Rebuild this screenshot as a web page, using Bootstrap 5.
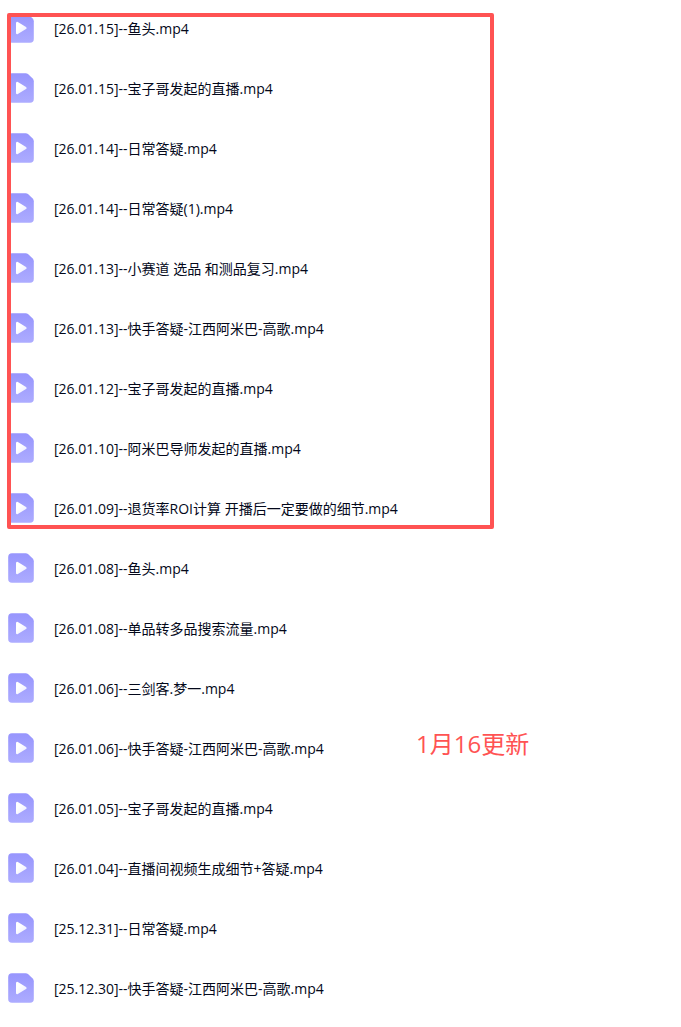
<!DOCTYPE html>
<html lang="zh-CN">
<head>
<meta charset="utf-8">
<meta name="viewport" content="width=device-width, initial-scale=1">
<title>视频列表</title>
<link href="https://cdn.jsdelivr.net/npm/bootstrap@5.3.0/dist/css/bootstrap.min.css" rel="stylesheet">
<style>
  body { font-family: "Open Sans", "Noto Sans CJK SC", sans-serif; font-size: 14px; line-height: 20px; color: #03081a; background: #fff; }
  .file-page { padding: 13px 8px 24px; }
  .file-group { gap: 30px; }
  .file-group-older { margin-top: 30px; }
  .file-item { gap: 20px; height: 30px; }
  .file-icon { width: 26px; height: 30px; }
  .file-name { padding-top: 2px; }
  /* red outline around the newest uploads */
  .new-frame { top: 0; left: -1px; width: 487px; max-width: 100%; bottom: -6px; border: 4px solid #ff5353; border-radius: 2px; pointer-events: none; }
  .update-note { left: 408px; top: -7px; font-size: 24px; line-height: 36px; color: #ff5353; white-space: nowrap; }
</style>
</head>
<body>
<svg width="0" height="0" class="position-absolute" aria-hidden="true">
  <defs>
    <linearGradient id="sheet" x1="0" y1="0" x2="0" y2="1"><stop offset="0" stop-color="#9795fd"/><stop offset="1" stop-color="#adacff"/></linearGradient>
    <linearGradient id="arrow" x1="0" y1="0" x2="1" y2="1"><stop offset=".3" stop-color="#fff"/><stop offset="1" stop-color="#ededff"/></linearGradient>
    <symbol id="video" viewBox="0 0 26 30">
      <path d="M4 .2H17.6Q19 .2 20 1.1L24.7 5.6Q25.8 6.7 25.8 8.2V26Q25.8 29.8 22 29.8H4Q.2 29.8.2 26V4Q.2.2 4 .2Z" fill="url(#sheet)"/>
      <path d="M9.2 10V20L17.4 15Z" fill="url(#arrow)" stroke="url(#arrow)" stroke-width="2.4" stroke-linejoin="round"/>
    </symbol>
  </defs>
</svg>
<main class="file-page container-fluid">
  <div class="position-relative">
    <ul class="file-group list-unstyled d-flex flex-column mb-0">
      <li class="file-item d-flex align-items-center"><svg class="file-icon flex-shrink-0" aria-hidden="true"><use href="#video"/></svg><span class="file-name">[26.01.15]--鱼头.mp4</span></li>
      <li class="file-item d-flex align-items-center"><svg class="file-icon flex-shrink-0" aria-hidden="true"><use href="#video"/></svg><span class="file-name">[26.01.15]--宝子哥发起的直播.mp4</span></li>
      <li class="file-item d-flex align-items-center"><svg class="file-icon flex-shrink-0" aria-hidden="true"><use href="#video"/></svg><span class="file-name">[26.01.14]--日常答疑.mp4</span></li>
      <li class="file-item d-flex align-items-center"><svg class="file-icon flex-shrink-0" aria-hidden="true"><use href="#video"/></svg><span class="file-name">[26.01.14]--日常答疑(1).mp4</span></li>
      <li class="file-item d-flex align-items-center"><svg class="file-icon flex-shrink-0" aria-hidden="true"><use href="#video"/></svg><span class="file-name">[26.01.13]--小赛道 选品 和测品复习.mp4</span></li>
      <li class="file-item d-flex align-items-center"><svg class="file-icon flex-shrink-0" aria-hidden="true"><use href="#video"/></svg><span class="file-name">[26.01.13]--快手答疑-江西阿米巴-高歌.mp4</span></li>
      <li class="file-item d-flex align-items-center"><svg class="file-icon flex-shrink-0" aria-hidden="true"><use href="#video"/></svg><span class="file-name">[26.01.12]--宝子哥发起的直播.mp4</span></li>
      <li class="file-item d-flex align-items-center"><svg class="file-icon flex-shrink-0" aria-hidden="true"><use href="#video"/></svg><span class="file-name">[26.01.10]--阿米巴导师发起的直播.mp4</span></li>
      <li class="file-item d-flex align-items-center"><svg class="file-icon flex-shrink-0" aria-hidden="true"><use href="#video"/></svg><span class="file-name">[26.01.09]--退货率ROI计算 开播后一定要做的细节.mp4</span></li>
    </ul>
    <div class="new-frame position-absolute"></div>
  </div>
  <ul class="file-group file-group-older list-unstyled d-flex flex-column mb-0">
    <li class="file-item d-flex align-items-center"><svg class="file-icon flex-shrink-0" aria-hidden="true"><use href="#video"/></svg><span class="file-name">[26.01.08]--鱼头.mp4</span></li>
    <li class="file-item d-flex align-items-center"><svg class="file-icon flex-shrink-0" aria-hidden="true"><use href="#video"/></svg><span class="file-name">[26.01.08]--单品转多品搜索流量.mp4</span></li>
    <li class="file-item d-flex align-items-center"><svg class="file-icon flex-shrink-0" aria-hidden="true"><use href="#video"/></svg><span class="file-name">[26.01.06]--三剑客.梦一.mp4</span></li>
    <li class="file-item d-flex align-items-center position-relative"><svg class="file-icon flex-shrink-0" aria-hidden="true"><use href="#video"/></svg><span class="file-name">[26.01.06]--快手答疑-江西阿米巴-高歌.mp4</span><span class="update-note position-absolute">1月16更新</span></li>
    <li class="file-item d-flex align-items-center"><svg class="file-icon flex-shrink-0" aria-hidden="true"><use href="#video"/></svg><span class="file-name">[26.01.05]--宝子哥发起的直播.mp4</span></li>
    <li class="file-item d-flex align-items-center"><svg class="file-icon flex-shrink-0" aria-hidden="true"><use href="#video"/></svg><span class="file-name">[26.01.04]--直播间视频生成细节+答疑.mp4</span></li>
    <li class="file-item d-flex align-items-center"><svg class="file-icon flex-shrink-0" aria-hidden="true"><use href="#video"/></svg><span class="file-name">[25.12.31]--日常答疑.mp4</span></li>
    <li class="file-item d-flex align-items-center"><svg class="file-icon flex-shrink-0" aria-hidden="true"><use href="#video"/></svg><span class="file-name">[25.12.30]--快手答疑-江西阿米巴-高歌.mp4</span></li>
  </ul>
</main>
<script src="https://cdn.jsdelivr.net/npm/bootstrap@5.3.0/dist/js/bootstrap.bundle.min.js"></script>
</body>
</html>
